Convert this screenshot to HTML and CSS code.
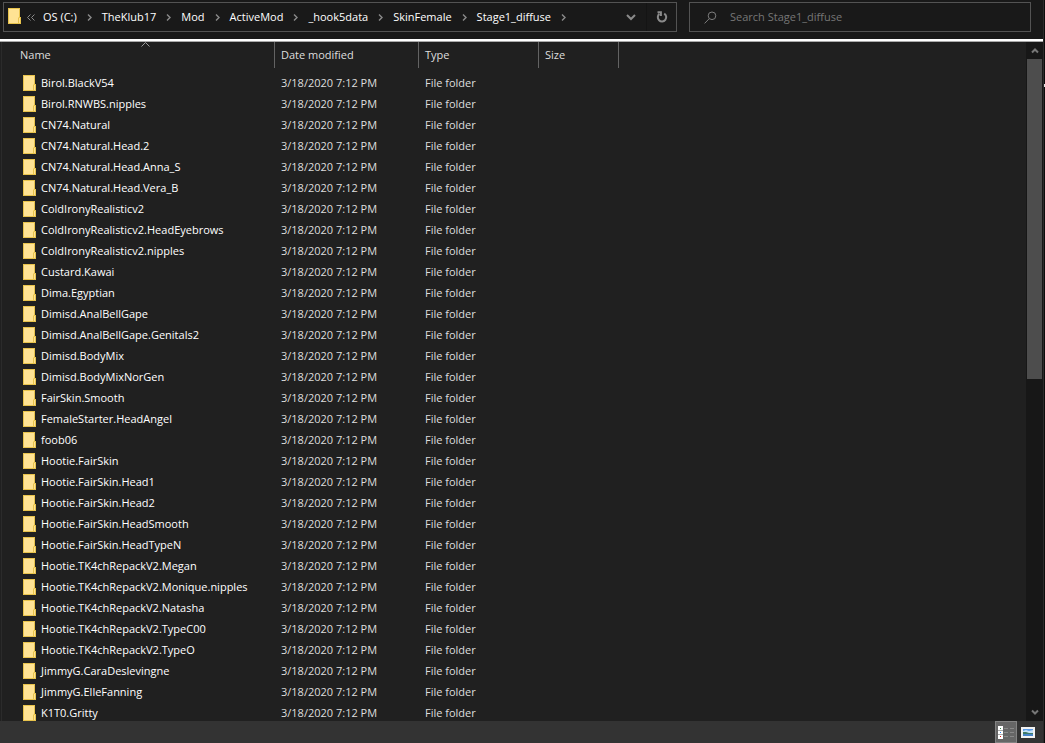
FILE: index.html
```html
<!DOCTYPE html>
<html lang="en">
<head>
  <meta charset="utf-8">
  <title>Stage1_diffuse</title>
  <link rel="stylesheet" href="styles.css">
</head>
<body>
  <div class="window">
    <header class="toolbar">
      <div class="address">
        <svg class="folder" viewBox="0 0 13 16" width="13" height="16"><path d="M0 0h12v9h1v7H0z" fill="#e8c34c"/><path d="M1 1h10v8l-1 1v5H1z" fill="#ffe394"/><path d="M11 10h1v5h-1z" fill="#ffe394"/></svg>
        <svg class="back" viewBox="0 0 8 7" width="8" height="7"><path d="M3.5.5l-3 3 3 3M7.5.5l-3 3 3 3"/></svg>
        <nav class="crumbs" id="crumbs" aria-label="Path"></nav>
        <button class="history" aria-label="Previous locations"><svg viewBox="0 0 10 7" width="10" height="7"><path d="M1 1l4 4 4-4"/></svg></button>
        <button class="refresh" aria-label="Refresh"><svg viewBox="0 0 12 12" width="12" height="12"><path d="M8.2 2.6a4.2 4.2 0 1 1-4.8.3"/><path d="M1.5 1.2h3.4v3.8"/></svg></button>
      </div>
      <label class="search">
        <svg viewBox="0 0 13 13" width="13" height="13"><circle cx="8" cy="4.8" r="3.8"/><path d="M5.3 7.6L.6 12.4"/></svg>
        <input type="text" placeholder="Search Stage1_diffuse" aria-label="Search Stage1_diffuse">
      </label>
    </header>

    <main class="content">
      <div class="list">
        <table>
          <colgroup>
            <col class="col-name">
            <col class="col-date">
            <col class="col-type">
            <col class="col-size">
            <col>
          </colgroup>
          <thead>
            <tr>
              <th>Name<svg class="sort" viewBox="0 0 9 5" width="9" height="5"><path d="M.5 4.5l4-4 4 4"/></svg></th>
              <th>Date modified</th>
              <th>Type</th>
              <th>Size</th>
              <td></td>
            </tr>
          </thead>
          <tbody id="files"></tbody>
        </table>
      </div>
      <div class="scrollbar">
        <button aria-label="Scroll up"><svg viewBox="0 0 8 7" width="8" height="7"><path d="M1 5.5l3-3 3 3"/></svg></button>
        <div class="track"><div class="thumb"></div></div>
        <button aria-label="Scroll down"><svg viewBox="0 0 8 7" width="8" height="7"><path d="M1 1.5l3 3 3-3"/></svg></button>
      </div>
    </main>

    <footer class="statusbar">
      <button class="view active" aria-label="Details">
        <svg viewBox="0 0 16 13" width="16" height="13"><path d="M0 0h5v13H0z" fill="#fff"/><path d="M0 4.5h5M0 8.5h5" stroke="#aaa" stroke-width="1"/><path d="M2 2h1v1H2z" fill="#3a8a4a"/><path d="M2 6h1v1H2z" fill="#2a7de0"/><path d="M2 10h1v1H2z" fill="#e01010"/><path d="M6 2h4v1H6zM12 2h4v1h-4zM6 6h4v1H6zM12 6h4v1h-4zM6 10h4v1H6zM12 10h4v1h-4z" fill="#898989"/></svg>
      </button>
      <button class="view" aria-label="Large icons">
        <svg viewBox="0 0 14 11" width="14" height="11"><path d="M0 0h14v11H0z" fill="#f2f2f2"/><path d="M2 2h10v7H2z" fill="#5b9be8"/><path d="M2 4l3-1 3 1 4-1v3H2z" fill="#c4e2f7"/><path d="M2 5h3l3 1h4v1H2z" fill="#3f7a66"/><path d="M2 7h10v2H2z" fill="#4684c6"/></svg>
      </button>
    </footer>
  </div>
  <div class="edge"></div>

  <script>
    const path = ['OS (C:)', 'TheKlub17', 'Mod', 'ActiveMod', '_hook5data', 'SkinFemale', 'Stage1_diffuse'];

    const folders = [
      'Birol.BlackV54',
      'Birol.RNWBS.nipples',
      'CN74.Natural',
      'CN74.Natural.Head.2',
      'CN74.Natural.Head.Anna_S',
      'CN74.Natural.Head.Vera_B',
      'ColdIronyRealisticv2',
      'ColdIronyRealisticv2.HeadEyebrows',
      'ColdIronyRealisticv2.nipples',
      'Custard.Kawai',
      'Dima.Egyptian',
      'Dimisd.AnalBellGape',
      'Dimisd.AnalBellGape.Genitals2',
      'Dimisd.BodyMix',
      'Dimisd.BodyMixNorGen',
      'FairSkin.Smooth',
      'FemaleStarter.HeadAngel',
      'foob06',
      'Hootie.FairSkin',
      'Hootie.FairSkin.Head1',
      'Hootie.FairSkin.Head2',
      'Hootie.FairSkin.HeadSmooth',
      'Hootie.FairSkin.HeadTypeN',
      'Hootie.TK4chRepackV2.Megan',
      'Hootie.TK4chRepackV2.Monique.nipples',
      'Hootie.TK4chRepackV2.Natasha',
      'Hootie.TK4chRepackV2.TypeC00',
      'Hootie.TK4chRepackV2.TypeO',
      'JimmyG.CaraDeslevingne',
      'JimmyG.ElleFanning',
      'K1T0.Gritty'
    ];

    const folderIcon = document.querySelector('.folder').outerHTML;
    const chevron = '<svg viewBox="0 0 5 7" width="5" height="7"><path d="M1 .5l3 3-3 3"/></svg>';

    document.getElementById('crumbs').innerHTML = path
      .map(name => `<a href="#">${name}</a>${chevron}`)
      .join('');

    document.getElementById('files').innerHTML = folders
      .map(name => `
        <tr>
          <td><div class="name">${folderIcon}<span>${name}</span></div></td>
          <td>3/18/2020 7:12 PM</td>
          <td>File folder</td>
          <td></td>
          <td></td>
        </tr>`)
      .join('');
  </script>
</body>
</html>
```
FILE: styles.css
```css
* {
  box-sizing: border-box;
}

body {
  margin: 0;
  display: flex;
  height: 100vh;
  overflow: hidden;
  background: #191919;
  color: #fff;
  font-family: "Open Sans", sans-serif;
  font-size: 11px;
  line-height: 16px;
}

button {
  display: flex;
  align-items: center;
  justify-content: center;
  padding: 0;
  border: none;
  background: none;
}

svg {
  flex: none;
  fill: none;
}

.window {
  flex: 1;
  min-width: 0;
  display: flex;
  flex-direction: column;
}

/* sliver of the window behind */
.edge {
  width: 2px;
  padding-top: 84px;
  background: #0c0c0c;
  border-left: 1px solid #2b2b2b;
}

.edge::before {
  content: "";
  display: block;
  height: 3px;
  background: #ddd;
}

/* address bar and search */
.toolbar {
  display: flex;
  gap: 12px;
  padding: 2px 12px 7px 3px;
  border-bottom: 2px solid #fff;
}

.address,
.search {
  display: flex;
  align-items: center;
  height: 30px;
  border: 1px solid #535353;
}

.address {
  flex: 1;
  padding-left: 4px;
}

.address .folder {
  margin-bottom: 2px;
}

.address .back {
  margin: 0 8px 0 6px;
  stroke: #8a8a8a;
}

.crumbs {
  flex: 1;
  display: flex;
  align-items: center;
  white-space: nowrap;
}

.crumbs a {
  color: #fff;
  text-decoration: none;
}

.crumbs svg {
  margin: 0 10px;
  stroke: #8a8a8a;
  stroke-width: 1.4;
}

.history,
.refresh {
  height: 28px;
  width: 30px;
  stroke: #8a8a8a;
  stroke-width: 2;
}

.refresh {
  border-left: 1px solid #141414;
}

.search {
  width: 342px;
  padding-left: 14px;
  gap: 13px;
}

.search svg {
  stroke: #7d7d7d;
}

.search input {
  flex: 1;
  min-width: 0;
  padding: 0;
  border: none;
  outline: none;
  background: none;
  color: #fff;
  font: inherit;
}

.search input::placeholder {
  color: #767676;
  opacity: 1;
}

/* file list */
.content {
  flex: 1;
  min-height: 0;
  display: flex;
  border-top: 1px solid #aaa;
  background: #202020;
}

.list {
  flex: 1;
  overflow: hidden;
  border-left: 1px solid #2b2b2b;
  margin-left: 1px;
}

table {
  width: 100%;
  table-layout: fixed;
  border-collapse: separate;
  border-spacing: 0;
}

.col-name {
  width: 273px;
}

.col-date {
  width: 144px;
}

.col-type {
  width: 120px;
}

.col-size {
  width: 80px;
}

th {
  position: relative;
  height: 26px;
  padding: 0 0 0 6px;
  border-right: 1px solid #636363;
  color: #dedede;
  font-weight: normal;
  text-align: left;
}

th:first-child {
  padding-left: 18px;
}

.sort {
  position: absolute;
  top: 0;
  left: 51%;
  stroke: #9a9a9a;
}

tbody::before {
  content: "";
  display: block;
  height: 5px;
}

tbody td {
  height: 21px;
  padding: 2px 0 0 6px;
  color: #dedede;
  vertical-align: top;
  white-space: nowrap;
}

tbody td:first-child {
  padding-left: 21px;
}

.name {
  display: flex;
  align-items: flex-start;
  gap: 5px;
  color: #fff;
}

/* scrollbar */
.scrollbar {
  width: 17px;
  display: flex;
  flex-direction: column;
  padding: 0 1px;
  background: #171717;
}

.scrollbar button {
  height: 17px;
  stroke: #777;
  stroke-width: 2;
}

.track {
  flex: 1;
}

.thumb {
  height: 50%;
  max-height: 320px;
  background: #4d4d4d;
}

/* status bar */
.statusbar {
  display: flex;
  justify-content: flex-end;
  height: 22px;
  padding-right: 4px;
  background: #333;
}

.view {
  width: 22px;
}

.view.active {
  background: #666;
  border: 1px solid #838383;
}
```
